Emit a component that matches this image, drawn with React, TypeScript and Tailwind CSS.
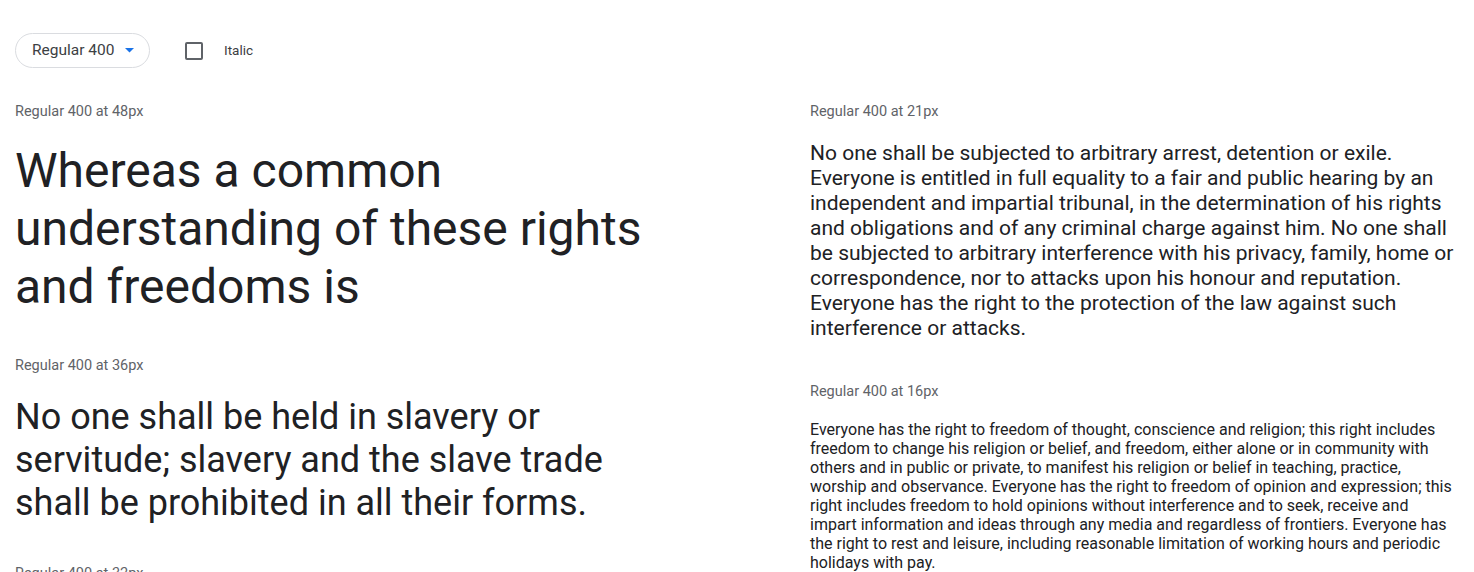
import React from "react";

const font = { fontFamily: "Roboto, 'Noto Sans', sans-serif" };

function Label({ children }: { children: React.ReactNode }) {
  return (
    <div className="text-[14.5px] leading-[16px] text-[#5f6368]" style={font}>
      {children}
    </div>
  );
}

export default function App() {
  return (
    <div className="w-[1474px] h-[572px] overflow-hidden bg-white text-[#202124]" style={font}>
      <div className="flex items-center pl-[15px] pt-[33px] h-[68px]">
        <button className="flex items-center h-[35px] w-[135px] rounded-full border border-[#dadce0] pl-[16px] text-[15.5px] text-[#3c4043]">
          <span>Regular 400</span>
          <svg className="ml-[11px]" width="9" height="5" viewBox="0 0 9 5">
            <path d="M0 0 L9 0 L4.5 4.5 Z" fill="#1a73e8" />
          </svg>
        </button>
        <div className="ml-[35px] w-[18px] h-[18px] border-2 border-[#5f6368] rounded-[2px]" />
        <span className="ml-[21px] text-[13.5px] text-[#3c4043]">Italic</span>
      </div>

      <div className="flex pl-[15px] pt-[36px]">
        <div className="w-[660px] flex flex-col">
          <Label>Regular 400 at 48px</Label>
          <p className="mt-[22px] text-[48px] leading-[58px]">
            Whereas a common understanding of these rights and freedoms is
          </p>
          <div className="mt-[42px]">
            <Label>Regular 400 at 36px</Label>
          </div>
          <p className="mt-[22px] text-[36px] leading-[43px]">
            No one shall be held in slavery or servitude; slavery and the slave trade shall be prohibited in all their forms.
          </p>
          <div className="mt-[41px]">
            <Label>Regular 400 at 32px</Label>
          </div>
        </div>
        <div className="ml-[135px] w-[645px] flex flex-col">
          <Label>Regular 400 at 21px</Label>
          <p className="mt-[21px] text-[21px] leading-[25px]">
            No one shall be subjected to arbitrary arrest, detention or exile. Everyone is entitled in full equality to a fair and public hearing by an independent and impartial tribunal, in the determination of his rights and obligations and of any criminal charge against him. No one shall be subjected to arbitrary interference with his privacy, family, home or correspondence, nor to attacks upon his honour and reputation. Everyone has the right to the protection of the law against such interference or attacks.
          </p>
          <div className="mt-[43px]">
            <Label>Regular 400 at 16px</Label>
          </div>
          <p className="mt-[20px] text-[16px] leading-[19px]">
            Everyone has the right to freedom of thought, conscience and religion; this right includes freedom to change his religion or belief, and freedom, either alone or in community with others and in public or private, to manifest his religion or belief in teaching, practice, worship and observance. Everyone has the right to freedom of opinion and expression; this right includes freedom to hold opinions without interference and to seek, receive and impart information and ideas through any media and regardless of frontiers. Everyone has the right to rest and leisure, including reasonable limitation of working hours and periodic holidays with pay.
          </p>
        </div>
      </div>
    </div>
  );
}
